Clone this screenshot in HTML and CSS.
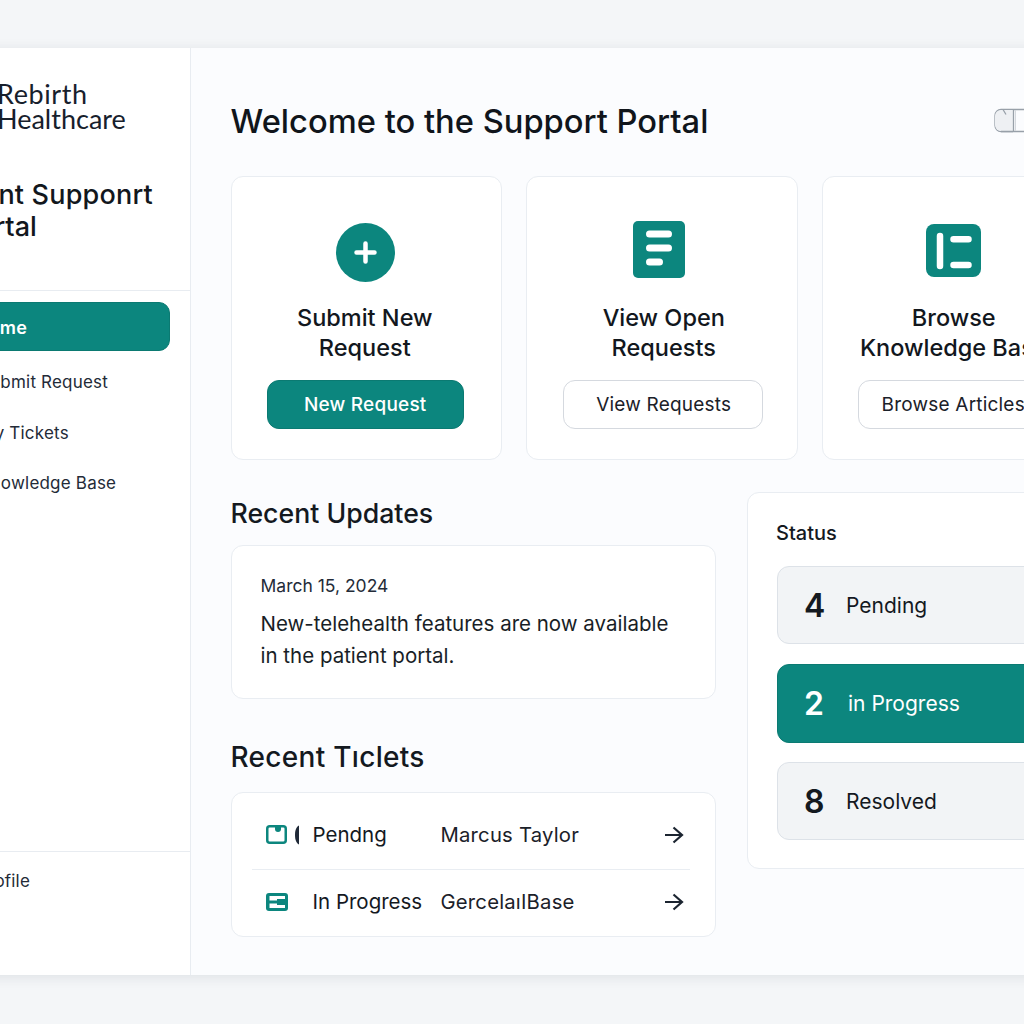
FILE: index.html
```html
<!DOCTYPE html>
<html lang="en">

<head>
  <meta charset="UTF-8">
  <title>Support Portal</title>
  <link rel="stylesheet" href="styles.css">
</head>
<body>
  <div class="shell">
    <aside class="sidebar">
      <div class="brand"><span class="brand-top">Rebirth</span><br>Healthcare</div>
      <h2 class="portal-name"><span class="portal-first">Patient Supponrt</span><br>Portal</h2>
      <nav class="nav">
        <a class="nav-item active">Home</a>
        <a class="nav-item">Submit Request</a>
        <a class="nav-item">My Tickets</a>
        <a class="nav-item">Knowledge Base</a>
      </nav>
      <div class="side-foot"><a class="nav-item">Profile</a></div>
    </aside>

    <main class="main">
      <header class="top">
        <h1>Welcome to the Support Portal</h1>
        <svg class="top-box" width="100" height="26" viewBox="0 0 100 26">
          <rect x="1" y="1.500" width="98" height="22" rx="6" fill="#fbfcfe" stroke="#98a0a9" stroke-width="1.300"/>
          <path d="M7 2h12.500v21H7a6 6 0 0 1-6-6V8a6 6 0 0 1 6-6z" fill="#eef0f3"/>
          <path d="M7 23.500h12M9 1.500l3 5" fill="none" stroke="#98a0a9" stroke-width="1.300"/>
          <path d="M19.500 1.500v22" stroke="#98a0a9" stroke-width="1.300"/>
          <path d="M21.500 2v21" stroke="#d4d8dd"/>
        </svg>
      </header>

      <section class="cards">
        <div class="card card-new">
          <svg class="card-icon" width="60" height="60" viewBox="0 0 60 60">
            <circle cx="29.500" cy="30.500" r="29.500" fill="#0c867e"/>
            <path d="M29.500 21.500v18M20.500 30.500h18" stroke="#fff" stroke-width="4.500" stroke-linecap="round"/>
          </svg>
          <h3>Submit New<br>Request</h3>
          <a class="btn primary">New Request</a>
        </div>
        <div class="card card-open">
          <svg class="card-icon" width="60" height="60" viewBox="3 2 60 60">
            <rect x="4" y="1" width="52" height="57" rx="5" fill="#0c867e"/>
            <path d="M20.500 14h19M20.500 28h19M20.500 42h10" stroke="#fff" stroke-width="7" stroke-linecap="round"/>
          </svg>
          <h3>View Open<br>Requests</h3>
          <a class="btn">View Requests</a>
        </div>
        <div class="card card-browse">
          <svg class="card-icon" width="60" height="60" viewBox="3 1 60 60">
            <rect x="2" y="3" width="55" height="53" rx="8" fill="#0c867e"/>
            <path d="M16 15v30M29.500 18.300h15M29.500 44h15" stroke="#fff" stroke-width="6.500" stroke-linecap="round"/>
          </svg>
          <h3>Browse<br>Knowledge Base</h3>
          <a class="btn">Browse Articles</a>
        </div>
      </section>

      <section class="lower">
        <div class="left-col">
          <h2 class="section-title">Recent Updates</h2>
          <div class="panel update">
            <div class="update-date">March 15, 2024</div>
            <p>New-telehealth features are now available in the patient portal.</p>
          </div>
          <h2 class="section-title tickets-title">Recent Tıclets</h2>
          <div class="panel tickets">
            <div class="ticket">
              <svg class="ticket-icon" width="34" height="22" viewBox="0 0 34 22">
                <rect x="1.250" y="2.250" width="18.500" height="16.500" rx="2.500" fill="none" stroke="#0c867e" stroke-width="2.500"/>
                <path d="M9 2h6v3a3 3 0 0 1-6 0z" fill="#0c867e"/>
                <path d="M33 1.500c-2.500 1-4 4.500-4 9.500s1.500 8.500 4 9.500z" fill="#1f2937"/>
              </svg>
              <span class="ticket-state">Pendng</span>
              <span class="ticket-name">Marcus Taylor</span>
              <svg class="arrow" width="20" height="20" viewBox="0 0 20 20">
                <path d="M1 10h17M9.500 2.500L18 10l-8.500 7.500" fill="none" stroke="#1b2430" stroke-width="2.200"/>
              </svg>
            </div>
            <div class="ticket">
              <svg class="ticket-icon" width="34" height="22" viewBox="0 0 34 22">
                <rect x="0" y="2" width="22" height="18" rx="3" fill="#0c867e"/>
                <path d="M3.500 5h15.500v3H11v1.500H3.500zM3.500 12.500H11V14h8v3H3.500z" fill="#fff"/>
              </svg>
              <span class="ticket-state">In Progress</span>
              <span class="ticket-name">GercelaıIBase</span>
              <svg class="arrow" width="20" height="20" viewBox="0 0 20 20">
                <path d="M1 10h17M9.500 2.500L18 10l-8.500 7.500" fill="none" stroke="#1b2430" stroke-width="2.200"/>
              </svg>
            </div>
          </div>
        </div>

        <div class="panel status">
          <h3 class="status-title">Status</h3>
          <div class="status-row"><b>4</b><span>Pending</span></div>
          <div class="status-row on"><b>2</b><span>in Progress</span></div>
          <div class="status-row"><b>8</b><span>Resolved</span></div>
        </div>
      </section>
    </main>
  </div>
</body>

</html>
```

FILE: styles.css
```css
* {
  margin: 0;
  padding: 0;
  box-sizing: border-box;
}

html, body {
  height: 100%;
  overflow: hidden;
}

body {
  background: #f4f6f8;
  font-family: "Inter", "Liberation Sans", sans-serif;
  color: #14191f;
  padding-top: 48px;
}

.shell {
  display: flex;
  width: 1203px;
  height: 927px;
  margin-left: -70px;
  box-shadow: 0 2px 12px rgba(30, 40, 60, 0.1);
}

/* sidebar */
.sidebar {
  width: 261px;
  flex: none;
  display: flex;
  flex-direction: column;
  background: #fff;
  border-right: 1px solid #e8ecf1;
}

.brand {
  margin: 33px 0 0 67px;
  font-family: "Lato", sans-serif;
  font-size: 27px;
  line-height: 25px;
  color: #17202c;
}

.brand-top {
  letter-spacing: 0.6px;
}

.portal-name {
  margin-top: 48px;
  padding: 0 0 47px 31px;
  border-bottom: 1px solid #e8ecf1;
  font-size: 27px;
  line-height: 32px;
  font-weight: 500;
  white-space: nowrap;
  color: #12171d;
}

.portal-first {
  margin-left: -28px;
  letter-spacing: 0.2px;
}

.nav {
  padding: 11px 20px 0 31px;
}

.nav-item {
  display: block;
  padding-left: 18px;
  height: 50.500px;
  line-height: 50px;
  font-size: 17px;
  letter-spacing: 0.2px;
  color: #232b38;
}

.nav-item.active {
  height: 49px;
  line-height: 49px;
  padding-left: 13px;
  margin-bottom: 6px;
  background: #0c867e;
  border: 1px solid #0b7a72;
  border-radius: 11px;
  color: #fff;
  font-weight: 600;
  font-size: 18px;
}

.side-foot {
  margin-top: auto;
  height: 124px;
  padding: 4px 0 0 29px;
  border-top: 1px solid #e8ecf1;
}

/* main */
.main {
  flex: 1;
  padding: 52px 39.500px 0;
  background: #fbfcfe;
}

.top {
  display: flex;
  justify-content: space-between;
  align-items: center;
  height: 42px;
}

.top h1 {
  font-size: 32.700px;
  font-weight: 500;
  white-space: nowrap;
  color: #10151b;
}

.top-box {
  flex: none;
}

.cards {
  display: flex;
  gap: 24px;
  margin-top: 34px;
}

.card {
  display: flex;
  flex-direction: column;
  align-items: center;
  width: 271.500px;
  flex: none;
  height: 284px;
  padding-top: 45px;
  background: #fff;
  border: 1px solid #e9edf2;
  border-radius: 12px;
}

.card-icon {
  overflow: visible;
}

.card h3 {
  margin-top: 21px;
  font-size: 23.500px;
  line-height: 30px;
  font-weight: 500;
  text-align: center;
  white-space: nowrap;
  color: #12171d;
}

.card-new h3 {
  margin-right: 3px;
}

.card-open h3 {
  margin-left: 4px;
}

.card-browse h3 {
  margin-right: 7px;
}

.btn {
  width: 200px;
  height: 49px;
  margin-top: 17px;
  line-height: 47px;
  text-align: center;
  font-size: 19px;
  letter-spacing: 0.2px;
  background: #fff;
  border: 1px solid #d5d9df;
  border-radius: 12px;
  color: #1b2129;
}

.btn.primary {
  width: 197px;
  margin-right: 2px;
  background: #0c867e;
  border-color: #0b7a72;
  color: #fff;
  font-weight: 500;
}

.card-open .btn {
  margin-left: 2px;
  padding-left: 2px;
}

.card-browse .btn {
  margin-left: 2px;
  padding-right: 10px;
}

.lower {
  display: flex;
  gap: 30.500px;
  margin-top: 32px;
}

.left-col {
  width: 485.500px;
  flex: none;
  padding-top: 4px;
}

.section-title {
  height: 34px;
  line-height: 34px;
  font-size: 26.700px;
  font-weight: 500;
  color: #14191f;
}

.panel {
  background: #fff;
  border: 1px solid #e9edf2;
  border-radius: 12px;
}

.update {
  height: 154px;
  margin-top: 15px;
  padding: 27px 29px 0;
}

.update-date {
  font-size: 17.500px;
  line-height: 26px;
  color: #232b38;
}

.update p {
  margin-top: 9px;
  font-size: 20.500px;
  line-height: 32px;
  color: #181e26;
}

.tickets-title {
  margin-top: 41px;
  font-size: 28px;
  letter-spacing: 0.3px;
}

.tickets {
  height: 145px;
  margin-top: 18px;
  padding: 7px 25px 0 20px;
}

.ticket {
  display: flex;
  align-items: center;
  height: 69px;
  padding: 0 6px 0 14px;
}

.ticket + .ticket {
  height: 64px;
  border-top: 1px solid #e9edf2;
}

.ticket-icon {
  flex: none;
  margin-right: 13px;
}

.ticket-state {
  width: 128px;
  font-size: 20.500px;
  font-weight: 430;
}

.ticket-name {
  font-size: 20.300px;
  letter-spacing: 0.2px;
  color: #1b2129;
}

.arrow {
  margin-left: auto;
}

.status {
  width: 346px;
  flex: none;
  height: 377px;
  padding: 25px 29.500px;
}

.status-title {
  height: 30px;
  line-height: 30px;
  margin-left: -1px;
  font-size: 20px;
  font-weight: 500;
}

.status-row {
  display: flex;
  align-items: center;
  height: 78px;
  margin-top: 20px;
  padding-left: 26px;
  background: #f2f4f6;
  border: 1px solid #dde2e8;
  border-radius: 12px;
}

.status-title + .status-row {
  margin-top: 18px;
}

.status-row b {
  width: 42px;
  font-size: 32px;
  font-weight: 600;
}

.status-row span {
  font-size: 21px;
}

.status-row.on {
  height: 79px;
  margin-bottom: -1px;
  background: #0c867e;
  border-color: #0b7a72;
  color: #fff;
}

.status-row.on span {
  margin-left: 2px;
}
```
